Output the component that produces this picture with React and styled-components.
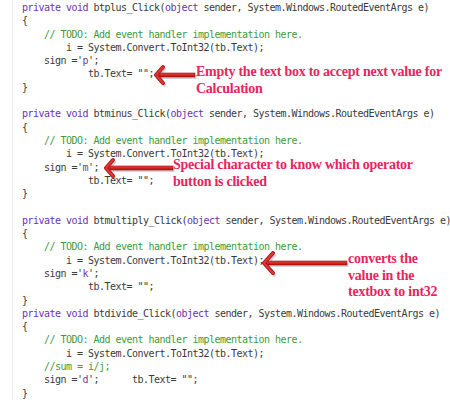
import styled, { createGlobalStyle } from 'styled-components'

const Global = createGlobalStyle`
  html, body { margin: 0; padding: 0; background: #fff; }
`

const Page = styled.div`
  position: relative;
  width: 450px;
  height: 402px;
  overflow: hidden;
  background: #fff;
`

const Code = styled.div`
  padding: 1px 0 0 9px;
  border-left: 1px solid #ececec;
  margin-left: 12px;
  font-family: "DejaVu Sans Mono", "Liberation Mono", monospace;
  font-size: 10px;
  letter-spacing: -0.52px;
  line-height: 13.3px;
  color: #3a3a3a;
  white-space: pre;
`

const Line = styled.div`
  height: 13.3px;
  padding-left: ${p => p.$indent * 5.5}px;
`

const Kw = styled.span`
  color: #6a32b0;
`

const Comment = styled.span`
  color: #3d9a3d;
`

const Chr = styled.span`
  color: #7b3a8e;
`

const Note = styled.div`
  position: absolute;
  left: ${p => p.$x}px;
  top: ${p => p.$y}px;
  font-family: "Liberation Serif", "Times New Roman", serif;
  font-weight: bold;
  font-size: 14px;
  letter-spacing: -0.25px;
  line-height: 16.5px;
  color: #e8245e;
  white-space: pre;
`

const ArrowBox = styled.svg`
  position: absolute;
  left: ${p => p.$x}px;
  top: ${p => p.$y}px;
  overflow: visible;
`

const Arrow = ({ x, y, len, head = 9 }) => (
  <ArrowBox $x={x} $y={y - head - 2} width={len} height={head * 2 + 4}>
    <defs>
      <linearGradient id={`g${x}`} x1="0" y1="0" x2="0" y2="1">
        <stop offset="0" stopColor="#f04040" />
        <stop offset="1" stopColor="#b01010" />
      </linearGradient>
    </defs>
    <g transform={`translate(0 ${head + 2})`}>
      <g opacity="0.25" transform="translate(1.5 2)">
        <rect x="3" y="-2" width={len - 3} height="4" fill="#555" />
        <path d={`M1 0 L${head} ${-head} M1 0 L${head} ${head}`} stroke="#555" strokeWidth="3.5" strokeLinecap="round" />
      </g>
      <rect x="3" y="-2" width={len - 3} height="4" fill={`url(#g${x})`} stroke="#a01010" strokeWidth="0.6" />
      <path d={`M1 0 L${head} ${-head} M1 0 L${head} ${head}`} stroke="#a81515" strokeWidth="4" strokeLinecap="round" fill="none" />
      <path d={`M1 0 L${head} ${-head} M1 0 L${head} ${head}`} stroke="#e53535" strokeWidth="2" strokeLinecap="round" fill="none" />
    </g>
  </ArrowBox>
)

const Handler = ({ name, sign, extra, merged }) => (
  <>
    <Line $indent={0}><Kw>private void</Kw> {name}(<Kw>object</Kw> sender, System.Windows.RoutedEventArgs e)</Line>
    <Line $indent={0}>{'{'}</Line>
    <Line $indent={4}><Comment>// TODO: Add event handler implementation here.</Comment></Line>
    <Line $indent={8}>i = System.Convert.ToInt32(tb.Text);</Line>
    {extra && <Line $indent={4}><Comment>{extra}</Comment></Line>}
    {merged ? (
      <Line $indent={4}>sign ='<Chr>{sign}</Chr>';      tb.Text= "";</Line>
    ) : (
      <>
        <Line $indent={4}>sign ='<Chr>{sign}</Chr>';</Line>
        <Line $indent={12}>tb.Text= "";</Line>
      </>
    )}
    <Line $indent={0}>{'}'}</Line>
  </>
)

const Blank = () => <Line $indent={0}> </Line>

export default function App() {
  return (
    <Page>
      <Global />
      <Code>
        <Handler name="btplus_Click" sign="p" />
        <Blank />
        <Handler name="btminus_Click" sign="m" />
        <Blank />
        <Handler name="btmultiply_Click" sign="k" />
        <Handler name="btdivide_Click" sign="d" extra="//sum = i/j;" merged />
      </Code>

      <Arrow x={155} y={75} len={40} head={8} />
      <Note $x={196} $y={64}>{'Empty the text box to accept next value for\nCalculation'}</Note>

      <Arrow x={105} y={168} len={68} head={8} />
      <Note $x={173} $y={157}>{'Special character to know which operator\nbutton is clicked'}</Note>

      <Arrow x={263} y={263} len={84} head={10} />
      <Note $x={348} $y={251}>{'converts the\nvalue in the\ntextbox to int32'}</Note>
    </Page>
  )
}
